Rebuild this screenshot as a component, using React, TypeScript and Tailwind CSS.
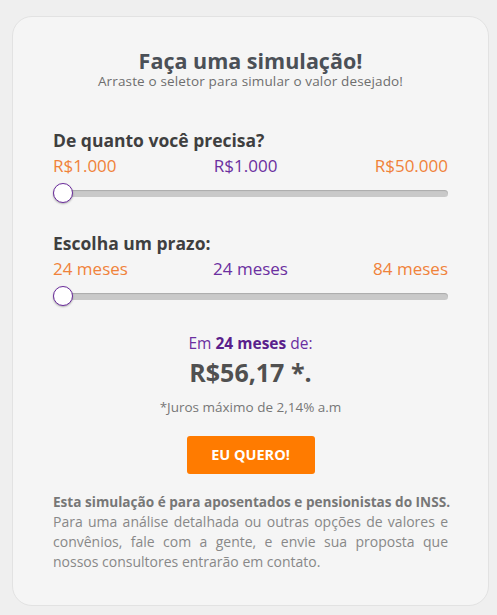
import React from "react";

function Slider() {
  return (
    <div className="relative mt-[6px] h-[20px] flex items-center">
      <div className="w-full h-[7px] rounded-full bg-[#c9c9c9] shadow-[inset_0_1px_1px_rgba(0,0,0,0.15)]" />
      <div className="absolute left-0 top-0 w-[20px] h-[20px] rounded-full bg-white border border-[#6a2a9c] shadow-[0_1px_2px_rgba(0,0,0,0.3)]" />
    </div>
  );
}

export default function App() {
  return (
    <div className="min-h-[615px] bg-[#efefef] pl-[12px] pr-[8px] pt-[16px] pb-[9px]" style={{ fontFamily: '"Open Sans", sans-serif' }}>
      <div className="bg-[#f5f5f5] border border-[#e2e2e2] rounded-[20px] px-[40px] pt-[31px] pb-[33px]">
        <div className="text-center">
          <h1 className="text-[21.5px] leading-[25px] font-bold text-[#4b5057]">Faça uma simulação!</h1>
          <p className="text-[13.5px] leading-[17px] text-[#6e6e6e] tracking-[0.15px]">Arraste o seletor para simular o valor desejado!</p>
        </div>

        <div className="mt-[39px]">
          <div className="text-[17.5px] leading-[22px] font-bold text-[#3f3f3f]">De quanto você precisa?</div>
          <div className="flex justify-between text-[17px] leading-[22px] mt-[4px]">
            <span className="text-[#f0823a]">R$1.000</span>
            <span className="text-[#6b2fa0]">R$1.000</span>
            <span className="text-[#f0823a]">R$50.000</span>
          </div>
          <Slider />
        </div>

        <div className="mt-[29px]">
          <div className="text-[17.5px] leading-[22px] font-bold text-[#3f3f3f]">Escolha um prazo:</div>
          <div className="flex justify-between text-[17px] leading-[22px] mt-[4px]">
            <span className="text-[#f0823a]">24 meses</span>
            <span className="text-[#6b2fa0]">24 meses</span>
            <span className="text-[#f0823a]">84 meses</span>
          </div>
          <Slider />
        </div>

        <div className="text-center mt-[27px]">
          <div className="text-[15.5px] leading-[20px] text-[#6b2fa0]">
            Em <b className="font-bold text-[#5a1f8c]">24 meses</b> de:
          </div>
          <div className="text-[25px] leading-[32px] font-bold text-[#505050] mt-[3px]">R$56,17 *.</div>
          <div className="text-[13.5px] leading-[16px] text-[#777] mt-[11px]">*Juros máximo de 2,14% a.m</div>
          <button className="mt-[21px] w-[128px] h-[38px] rounded-[3px] bg-[#ff7b00] text-white text-[14.5px] font-bold">EU QUERO!</button>
        </div>

        <div className="mt-[18px] text-[#888] text-justify">
          <div className="text-[13.6px] leading-[20px] font-bold text-[#777] whitespace-nowrap">Esta simulação é para aposentados e pensionistas do INSS.</div>
          <div className="text-[14px] leading-[20px]">Para uma análise detalhada ou outras opções de valores e convênios, fale com a gente, e envie sua proposta que nossos consultores entrarão em contato.</div>
        </div>
      </div>
    </div>
  );
}
